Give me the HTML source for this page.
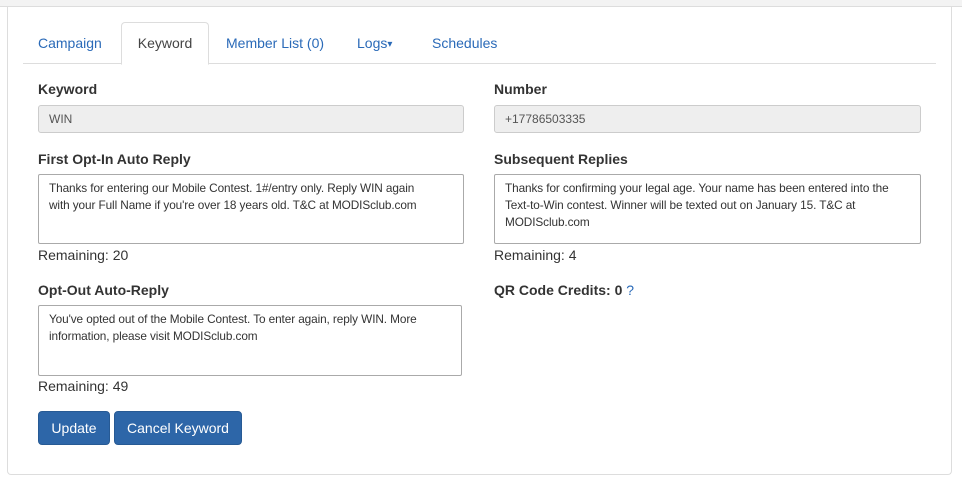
<!DOCTYPE html><html><head><style>
body{margin:0;width:962px;height:488px;background:#fff;font-family:"Liberation Sans",sans-serif;font-size:14px;color:#333;position:relative;overflow:hidden}
.a{position:absolute}
.top{left:0;top:0;width:962px;height:6px;background:#f3f3f3;border-bottom:1px solid #ddd}
.panel{left:7px;top:6px;width:943px;height:468px;border:1px solid #ddd;border-top:none;border-radius:0 0 4px 4px;background:#fff}
.tabline{left:23px;top:63px;width:913px;height:1px;background:#ddd}
.tab{top:35px;color:#2a6ab8;font-size:14px}
.act{left:121px;top:22px;width:86px;height:41px;border:1px solid #ddd;border-bottom:1px solid #fff;border-radius:4px 4px 0 0;background:#fff;text-align:center;line-height:41px;color:#444}
.lbl{font-weight:bold;font-size:14px;color:#333}
.inp{background:#eee;border:1px solid #ccc;border-radius:3px;height:28px;box-sizing:border-box;padding:0 10px;line-height:27px;font-size:12px;color:#555}
.ta{border:1px solid #aaa;border-radius:2px;box-sizing:border-box;padding:5px 10px;font-size:11.8px;letter-spacing:-0.1px;line-height:17px;color:#333;white-space:nowrap}
.btn{top:411px;height:34px;background:#2d66a8;border:1px solid #275a94;border-radius:4px;color:#fff;font-size:14px;line-height:33px;text-align:center;box-sizing:border-box}
</style></head><body>
<div class="a panel"></div>
<div class="a top"></div>
<div class="a tabline"></div>
<div class="a tab" style="left:38px">Campaign</div>
<div class="a act">Keyword</div>
<div class="a tab" style="left:226px">Member List (0)</div>
<div class="a tab" style="left:357px">Logs<span style="font-size:10px;vertical-align:1px">&#9662;</span></div>
<div class="a tab" style="left:432px">Schedules</div>
<div class="a lbl" style="left:38px;top:81px">Keyword</div>
<div class="a inp" style="left:38px;top:105px;width:426px">WIN</div>
<div class="a lbl" style="left:494px;top:81px">Number</div>
<div class="a inp" style="left:494px;top:105px;width:427px">+17786503335</div>
<div class="a lbl" style="left:38px;top:151px">First Opt-In Auto Reply</div>
<div class="a ta" style="left:38px;top:174px;width:426px;height:70px">Thanks for entering our Mobile Contest. 1#/entry only. Reply WIN again<br>with your Full Name if you're over 18 years old. T&amp;C at MODISclub.com</div>
<div class="a" style="left:38px;top:247px">Remaining: 20</div>
<div class="a lbl" style="left:494px;top:151px">Subsequent Replies</div>
<div class="a ta" style="left:494px;top:174px;width:427px;height:70px">Thanks for confirming your legal age. Your name has been entered into the<br>Text-to-Win contest. Winner will be texted out on January 15. T&amp;C at<br>MODISclub.com</div>
<div class="a" style="left:494px;top:247px">Remaining: 4</div>
<div class="a lbl" style="left:38px;top:282px">Opt-Out Auto-Reply</div>
<div class="a ta" style="left:38px;top:305px;width:424px;height:71px">You've opted out of the Mobile Contest. To enter again, reply WIN. More<br>information, please visit MODISclub.com</div>
<div class="a" style="left:38px;top:378px">Remaining: 49</div>
<div class="a lbl" style="left:494px;top:282px">QR Code Credits: 0 <span style="color:#2a6ab8;font-weight:normal">?</span></div>
<div class="a btn" style="left:38px;width:72px">Update</div>
<div class="a btn" style="left:114px;width:128px">Cancel Keyword</div>
</body></html>
